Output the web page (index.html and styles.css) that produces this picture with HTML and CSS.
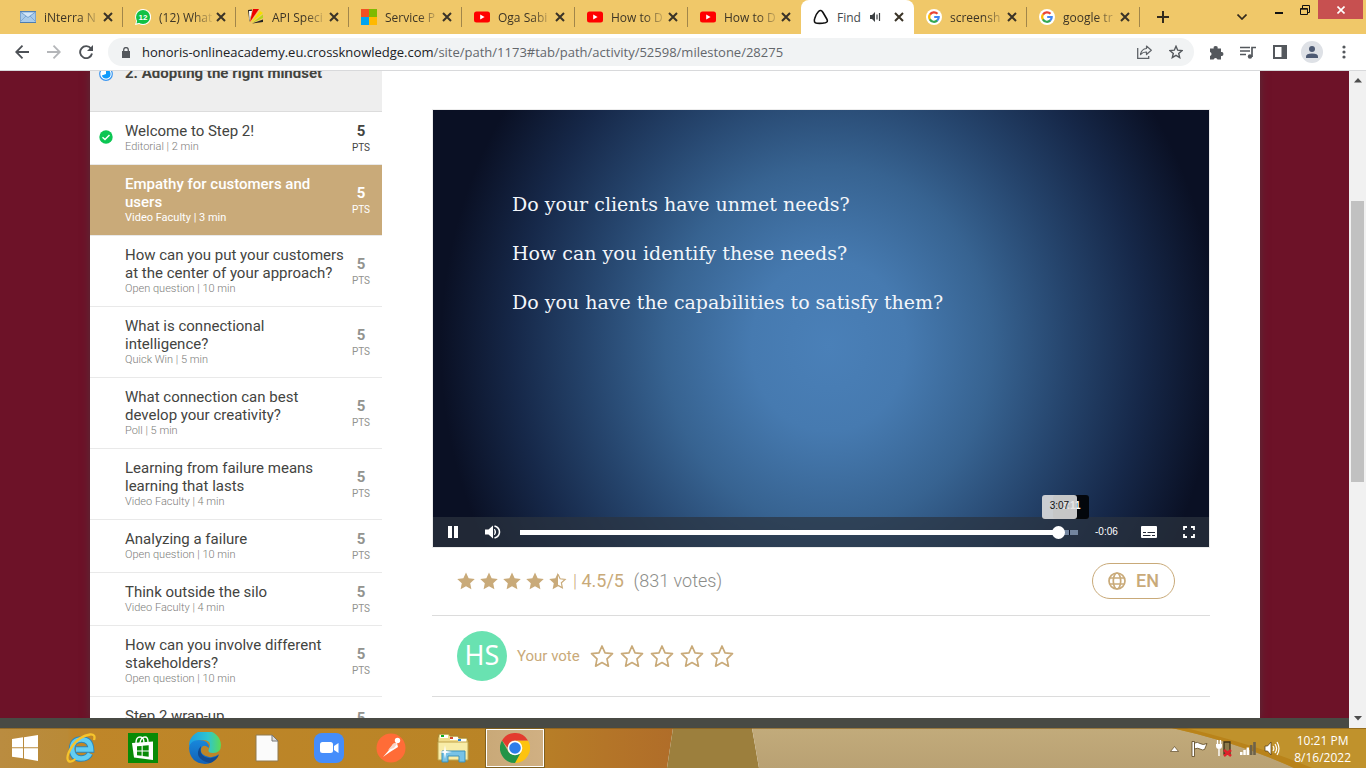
FILE: index.html
```html
<!DOCTYPE html>
<html lang="en">
<head>
<meta charset="utf-8">
<title>Find your path</title>
<link rel="stylesheet" href="styles.css">
</head>
<body>
<svg class="defs" aria-hidden="true">
  <symbol id="x" viewBox="0 0 10 10"><path d="M1 1l8 8M9 1L1 9" stroke="#3a3327" stroke-width="2" fill="none"/></symbol>
  <symbol id="yt" viewBox="0 0 16 16"><rect y="2.500" width="16" height="11" rx="2.500" fill="#f00"/><path d="M6.200 5.500v5L10.600 8z" fill="#fff"/></symbol>
  <symbol id="g" viewBox="0 0 16 16"><circle cx="8" cy="8" r="8" fill="#fff"/><g fill="none" stroke-width="2.200"><path d="M4 5.600A4.700 4.700 0 0 1 11.500 4.800" stroke="#ea4335"/><path d="M4 5.400a4.700 4.700 0 0 0 0 5.200" stroke="#fbbc05"/><path d="M3.900 10.400a4.700 4.700 0 0 0 7.400 1" stroke="#34a853"/><path d="M8.200 8h4.500a4.600 4.600 0 0 1-1.600 3.600" stroke="#4285f4"/></g></symbol>
  <symbol id="star" viewBox="0 0 24 24"><path d="M12 .8l3.500 7.500 8.200 1-6.100 5.600 1.600 8.200L12 19l-7.200 4.100 1.600-8.200L.3 9.300l8.200-1z"/></symbol>
  <symbol id="half" viewBox="0 0 24 24"><path d="M12 .8V19l-7.200 4.100 1.600-8.200L.3 9.300l8.200-1z"/><path d="M12 3l2.800 6 6.700.8-5 4.600 1.300 6.600L12 17.800" fill="none" stroke="#c9aa79" stroke-width="1.600"/></symbol>
  <symbol id="outline" viewBox="0 0 24 24"><path d="M12 2l3 6.800 7.500.9-5.500 5.100 1.400 7.400L12 18.600l-6.400 3.600L7 14.800 1.500 9.700 9 8.800z" fill="none" stroke="#c9aa79" stroke-width="1.700" stroke-linejoin="round"/></symbol>
</svg>

<header class="chrome">
  <div class="tabstrip">
    <div class="tab"><svg class="fav" viewBox="0 0 16 16"><rect y="2.500" width="16" height="11" fill="#a9cbea" stroke="#4e7db0"/><path d="M0 13l6-6M16 13l-6-6" fill="none" stroke="#7fa9d4"/><path d="M.5 3l7.500 5.500L15.500 3z" fill="#d3e6f7" stroke="#5b8cc0" stroke-width=".7"/></svg><span class="name">iNterra N</span><button class="close" aria-label="Close tab"><svg><use href="#x"/></svg></button></div>
    <div class="tab"><svg class="fav" viewBox="0 0 16 16"><path d="M8 0a8 8 0 1 1-3.800 15L0 16l1.200-4A8 8 0 0 1 8 0z" fill="#fff"/><circle cx="8" cy="8" r="7" fill="#12c144"/><path d="M1.500 14.500l1-4 3 3z" fill="#12c144"/><text x="8" y="11" text-anchor="middle" class="badge">12</text></svg><span class="name">(12) What</span><button class="close" aria-label="Close tab"><svg><use href="#x"/></svg></button></div>
    <div class="tab"><svg class="fav" viewBox="0 0 16 16"><path d="M0 1l4-.5L1.500 13z" fill="#222"/><path d="M1 2h3L1.500 12z" fill="#fff"/><path d="M5 0h6L2 13z" fill="#e00"/><path d="M12 2l3 2L3 13.500z" fill="#f5e000"/><path d="M15 5.500V9L4 14z" fill="#b5d51d"/><path d="M15 10.500V13L4 14.500z" fill="#222"/></svg><span class="name">API Speci</span><button class="close" aria-label="Close tab"><svg><use href="#x"/></svg></button></div>
    <div class="tab"><svg class="fav" viewBox="0 0 16 16"><path d="M0 0h8v8H0z" fill="#f25022"/><path d="M8 0h8v8H8z" fill="#7fba00"/><path d="M0 8h8v8H0z" fill="#00a4ef"/><path d="M8 8h8v8H8z" fill="#ffb900"/></svg><span class="name">Service P</span><button class="close" aria-label="Close tab"><svg><use href="#x"/></svg></button></div>
    <div class="tab"><svg class="fav"><use href="#yt"/></svg><span class="name">Oga Sabi</span><button class="close" aria-label="Close tab"><svg><use href="#x"/></svg></button></div>
    <div class="tab"><svg class="fav"><use href="#yt"/></svg><span class="name">How to D</span><button class="close" aria-label="Close tab"><svg><use href="#x"/></svg></button></div>
    <div class="tab before"><svg class="fav"><use href="#yt"/></svg><span class="name">How to D</span><button class="close" aria-label="Close tab"><svg><use href="#x"/></svg></button></div>
    <div class="tab active"><svg class="fav" viewBox="0 0 16 16"><path d="M5.500 2.500Q8 0 10 3.500l3.800 6.500q1.700 3-1.500 3.800-4 .9-8.300.5Q.2 13.800 1.700 9.500 3 5 5.500 2.500z" fill="none" stroke="#111" stroke-width="1.600"/></svg><span class="name">Find</span><svg class="sound" viewBox="0 0 12 10"><path d="M0 3h2l3-3v10L2 7H0z" fill="#3c4043"/><path d="M7 2.500v5M9.500 1v8" stroke="#3c4043" stroke-width="1.200"/></svg><button class="close" aria-label="Close tab"><svg><use href="#x"/></svg></button></div>
    <div class="tab"><svg class="fav"><use href="#g"/></svg><span class="name">screensh</span><button class="close" aria-label="Close tab"><svg><use href="#x"/></svg></button></div>
    <div class="tab"><svg class="fav"><use href="#g"/></svg><span class="name">google tr</span><button class="close" aria-label="Close tab"><svg><use href="#x"/></svg></button></div>
    <button class="newtab" aria-label="New tab"><svg viewBox="0 0 12 12"><path d="M6 0v12M0 6h12" stroke="#332b1d" stroke-width="2"/></svg></button>
    <div class="win">
      <button class="chev" aria-label="Search tabs"><svg width="10" height="6" viewBox="0 0 10 6"><path d="M.5.500L5 5l4.500-4.500" fill="none" stroke="#332b1d" stroke-width="1.700"/></svg></button>
      <button class="wbtn" aria-label="Minimize"><svg width="10" height="10" viewBox="0 0 10 10"><path d="M1 8h8" stroke="#111" stroke-width="2"/></svg></button>
      <button class="wbtn" aria-label="Restore"><svg width="10" height="10" viewBox="0 0 10 10"><path d="M.5 3.500h7v6h-7zM.5 4.200h7M2.500 3V.5h7v7H8" fill="none" stroke="#111"/></svg></button>
      <button class="wclose" aria-label="Close window"><svg width="8" height="8" viewBox="0 0 8 8"><path d="M.5.500l7 7M7.500.500l-7 7" stroke="#fff" stroke-width="1.600"/></svg></button>
    </div>
  </div>
  <div class="toolbar">
    <button aria-label="Back"><svg width="14" height="14" viewBox="0 0 14 14"><path d="M14 7H1.500M7.500.700L1.200 7l6.300 6.300" fill="none" stroke="#4d5156" stroke-width="1.800"/></svg></button>
    <button aria-label="Forward"><svg width="14" height="14" viewBox="0 0 14 14"><path d="M0 7h12.500M6.500.700L12.800 7l-6.300 6.300" fill="none" stroke="#b4b6b9" stroke-width="1.800"/></svg></button>
    <button aria-label="Reload"><svg width="14" height="14" viewBox="0 0 14 14"><path d="M12 3.600A6 6 0 1 0 13 8.500" fill="none" stroke="#4d5156" stroke-width="1.900"/><path d="M14 0v6H8z" fill="#4d5156"/></svg></button>
    <div class="omnibox">
      <svg class="lock" width="8" height="11" viewBox="0 0 8 11"><path d="M0 4h8v7H0z" fill="#54585d"/><path d="M1.700 4.500V2.800a2.300 2.300 0 0 1 4.600 0v1.700" fill="none" stroke="#54585d" stroke-width="1.300"/></svg>
      <a class="url" href="#"><b>honoris-onlineacademy.eu.crossknowledge.com</b>/site/path/1173#tab/path/activity/52598/milestone/28275</a>
      <button aria-label="Share"><svg width="15" height="14" viewBox="0 0 15 14"><path d="M.7 3v10.300h11V11" fill="none" stroke="#5f6368" stroke-width="1.300"/><path d="M9.500 1l4.800 4.300-4.800 4.200V7Q6 6.800 3.500 9.500 4.500 4 9.500 3.500z" fill="none" stroke="#5f6368" stroke-width="1.200" stroke-linejoin="round"/></svg></button>
      <button aria-label="Bookmark"><svg width="14" height="14" viewBox="0 0 14 14"><path d="M7 1.300l1.700 3.900 4.300.4-3.300 2.800 1 4.200L7 10.400l-3.700 2.200 1-4.200L1 5.600l4.300-.4z" fill="none" stroke="#54585d" stroke-width="1.400"/></svg></button>
    </div>
    <div class="ext">
      <button aria-label="Extensions"><svg width="15" height="15" viewBox="0 0 15 15"><path d="M1 3.500h3.700a2 2 0 1 1 3.900 0H12v3.600a2 2 0 1 1 0 3.900v3.500H8.500a2 2 0 0 0-3.900 0H1V11a2 2 0 0 0 0-3.900z" fill="#54585d"/></svg></button>
      <button aria-label="Media"><svg width="16" height="13" viewBox="0 0 16 13"><path d="M0 1.500h10M0 5h10M0 8.500h6" stroke="#54585d" stroke-width="1.600"/><circle cx="10" cy="10.500" r="2.200" fill="#54585d"/><path d="M12 11V1.500h4" fill="none" stroke="#54585d" stroke-width="1.700"/></svg></button>
      <button aria-label="Side panel"><svg width="14" height="14" viewBox="0 0 14 14"><path d="M1 1h12v12H1z" fill="none" stroke="#54585d" stroke-width="2"/><path d="M8.500 1H13v12H8.500z" fill="#54585d"/></svg></button>
      <button aria-label="Profile"><svg width="22" height="22" viewBox="0 0 22 22"><circle cx="11" cy="11" r="11" fill="#dee1e6"/><circle cx="11" cy="8" r="3" fill="#4d5a73"/><path d="M5 17v-1.500q0-3 6-3t6 3V17z" fill="#4d5a73"/></svg></button>
      <button aria-label="Menu"><svg width="4" height="14" viewBox="0 0 4 14"><g fill="#54585d"><circle cx="2" cy="2" r="1.600"/><circle cx="2" cy="7" r="1.600"/><circle cx="2" cy="12" r="1.600"/></g></svg></button>
    </div>
  </div>
</header>

<div class="viewport">
  <div class="scene">
    <div class="page">
      <aside class="side">
        <div class="step"><svg class="state" viewBox="0 0 14 14"><circle cx="7" cy="7" r="6.300" fill="#fff" stroke="#3b96f0" stroke-width="1.200"/><path d="M7 2.500a4.500 4.500 0 1 1-4.200 6L7 7z" fill="#109bfb"/></svg><h2>2. Adopting the right mindset</h2></div>
        <ul class="list">
          <li class="done"><svg class="state" viewBox="0 0 14 14"><circle cx="7" cy="7" r="6.700" fill="#0cc653"/><path d="M3.500 7.200l2.500 2.400 4.500-4.600" fill="none" stroke="#fff" stroke-width="1.400"/></svg><a href="#">Welcome to Step 2!<small>Editorial | 2 min</small></a><p class="pts"><b>5</b>PTS</p></li>
          <li class="current"><a href="#">Empathy for customers and users<small>Video Faculty | 3 min</small></a><p class="pts"><b>5</b>PTS</p></li>
          <li><a href="#">How can you put your customers at the center of your approach?<small>Open question | 10 min</small></a><p class="pts"><b>5</b>PTS</p></li>
          <li><a href="#">What is connectional intelligence?<small>Quick Win | 5 min</small></a><p class="pts"><b>5</b>PTS</p></li>
          <li><a href="#">What connection can best develop your creativity?<small>Poll | 5 min</small></a><p class="pts"><b>5</b>PTS</p></li>
          <li><a href="#">Learning from failure means learning that lasts<small>Video Faculty | 4 min</small></a><p class="pts"><b>5</b>PTS</p></li>
          <li><a href="#">Analyzing a failure<small>Open question | 10 min</small></a><p class="pts"><b>5</b>PTS</p></li>
          <li><a href="#">Think outside the silo<small>Video Faculty | 4 min</small></a><p class="pts"><b>5</b>PTS</p></li>
          <li><a href="#">How can you involve different stakeholders?<small>Open question | 10 min</small></a><p class="pts"><b>5</b>PTS</p></li>
          <li class="last"><a href="#">Step 2 wrap-up</a><p class="pts"><b>5</b></p></li>
        </ul>
      </aside>
      <main class="main">
        <section class="video">
          <div class="slide">
            <p>Do your clients have unmet needs?</p>
            <p>How can you identify these needs?</p>
            <p>Do you have the capabilities to satisfy them?</p>
          </div>
          <div class="controls">
            <button aria-label="Pause"><svg width="12" height="12" viewBox="0 0 12 12"><path d="M1 0h4v12H1zM7 0h4v12H7z" fill="#fff"/></svg></button>
            <button aria-label="Mute"><svg width="16" height="14" viewBox="0 0 16 14"><path d="M0 4.500h3.500L8 .5v13l-4.500-4H0z" fill="#fff"/><path d="M9.500 4q2.200 3 0 6" fill="#fff" stroke="#fff"/><path d="M9.500 1q5 1.500 5 6t-5 6" fill="none" stroke="#fff" stroke-width="1.600"/></svg></button>
            <div class="progress">
              <div class="played"><span class="knob"></span><span class="tip dark">3:11</span><span class="tip light">3:07</span></div>
              <span class="tick"></span>
            </div>
            <span class="time">-0:06</span>
            <button aria-label="Subtitles"><svg width="16" height="12" viewBox="0 0 16 12"><rect width="16" height="12" rx="1" fill="#fff"/><path d="M2 6.500h3M6.500 6.500h7.500M2 9.500h7.500M11 9.500h3" stroke="#232a38" stroke-width="1.200"/></svg></button>
            <button aria-label="Fullscreen"><svg width="12" height="12" viewBox="0 0 12 12"><path d="M1 4V1h3M8 1h3v3M11 8v3H8M4 11H1V8" fill="none" stroke="#fff" stroke-width="1.800"/></svg></button>
          </div>
        </section>
        <section class="rating">
          <div class="stars"><svg><use href="#star"/></svg><svg><use href="#star"/></svg><svg><use href="#star"/></svg><svg><use href="#star"/></svg><svg><use href="#half"/></svg></div>
          <p class="score"><i>|</i> 4.5/5 <span>(831 votes)</span></p>
          <button class="lang"><svg width="18" height="18" viewBox="0 0 18 18"><g fill="none" stroke="#c9aa79" stroke-width="1.700"><circle cx="9" cy="9" r="8"/><ellipse cx="9" cy="9" rx="3.700" ry="8"/><path d="M1.500 6h15M1.500 12h15"/></g></svg>EN</button>
        </section>
        <section class="vote">
          <span class="avatar">HS</span>
          <span class="label">Your vote</span>
          <div class="pick"><button aria-label="1 star"><svg><use href="#outline"/></svg></button><button aria-label="2 stars"><svg><use href="#outline"/></svg></button><button aria-label="3 stars"><svg><use href="#outline"/></svg></button><button aria-label="4 stars"><svg><use href="#outline"/></svg></button><button aria-label="5 stars"><svg><use href="#outline"/></svg></button></div>
        </section>
      </main>
    </div>
    <div class="strip"></div>
  </div>
  <div class="scroll">
    <svg width="8" height="5" viewBox="0 0 8 5"><path d="M0 4.500L4 0l4 4.500z" fill="#4d4d4d"/></svg>
    <div class="track"><span class="thumb"></span></div>
    <svg width="8" height="5" viewBox="0 0 8 5"><path d="M0 0l4 4.500L8 0z" fill="#4d4d4d"/></svg>
  </div>
</div>

<footer class="taskbar">
  <svg class="wall" viewBox="0 0 1366 40" preserveAspectRatio="none" aria-hidden="true">
    <defs>
      <linearGradient id="w1"><stop offset="0" stop-color="#ba8c40"/><stop offset=".1" stop-color="#b98a37"/><stop offset=".11" stop-color="#bf8629"/><stop offset=".75" stop-color="#b98426"/><stop offset=".9" stop-color="#b47528"/><stop offset="1" stop-color="#b06d29"/></linearGradient>
      <linearGradient id="w2" x2="0" y2="1"><stop offset="0" stop-color="#c2ab7b"/><stop offset="1" stop-color="#b9a173"/></linearGradient>
    </defs>
    <path d="M0 0h673l-6 40H0z" fill="url(#w1)"/>
    <path d="M673 0h79l7 40h-92z" fill="#9c7f3d"/>
    <path d="M752 0h614v40H759z" fill="url(#w2)"/>
    <path d="M1172 0h194v40h-72Q1240 15 1172 0z" fill="#c0922c"/>
    <path d="M1172 0h14Q1260 18 1312 40h-18Q1240 15 1172 0z" fill="#b9831a"/>
    <path d="M0 .5h1366" stroke="#7d5718" opacity=".6"/>
  </svg>
  <button class="start" aria-label="Start"><svg width="28" height="26" viewBox="0 0 28 26"><path d="M1 4l11-1.700v10H1zM13 2.200L27 0v12.300H13zM1 13.300h11v10L1 21.700zM13 13.300h14V26l-14-2.400z" fill="#fff"/></svg></button>
  <nav class="apps">
    <button aria-label="Internet Explorer"><svg width="32" height="32" viewBox="0 0 32 32"><path d="M25 21.500q-2.500 5-9 5-8.500 0-9-9.500.5-9.500 9.500-9.500T26 17.500H11" fill="none" stroke="#2c86bb" stroke-width="6.500"/><path d="M25 21.500q-2.500 5-9 5-8.500 0-9-9.500.5-9.500 9.500-9.500T26 17.500H11" fill="none" stroke="#62cdf3" stroke-width="4.700"/><path d="M29 8q2-6-4-5.500Q15 4 8 13 0 25 3.500 29q2.500 2 7-2" fill="none" stroke="#f6c42c" stroke-width="2.300"/></svg></button>
    <button aria-label="Store"><svg width="30" height="30" viewBox="0 0 30 30"><path d="M0 0h30v30H0z" fill="#088a06"/><path d="M4 10l21-1.500V27L6 24.500z" fill="#fff"/><path d="M8 10q0-6 4-6t4 6M12 10q1-6 5-6 3 0 3 5" fill="none" stroke="#fff" stroke-width="1.400"/><path d="M9 13.300l4.600-.4v4.500H9zM14.700 12.800l6-.5v5.100h-6zM9 18.500h4.600v4.300l-4.600-.6zM14.700 18.500h6v5.200l-6-.8z" fill="#088a06"/></svg></button>
    <button aria-label="Edge"><svg width="32" height="32" viewBox="0 0 32 32"><defs><linearGradient id="e1"><stop stop-color="#1a9fe3"/><stop offset=".6" stop-color="#2fc5cf"/><stop offset="1" stop-color="#5cdb55"/></linearGradient><linearGradient id="e2" x2="0" y2="1"><stop stop-color="#1888dc"/><stop offset="1" stop-color="#1361b5"/></linearGradient></defs><path d="M0 14A16 15 0 0 1 32 13q0 8-8 8-6 0-4-4Q24 8 13 8 4 8 0 14z" fill="url(#e1)"/><path d="M0 16Q1 8 10 8q10 0 10 8-6-5-8 1-1 6 8 8 5 1 10-3-5 10-14 10Q1 31 0 16z" fill="url(#e2)"/><path d="M12 14q-2 8 4 11 7 3 14-2-3 6-9 8Q8 28 9 20q1-4 3-6z" fill="#124a91"/></svg></button>
    <button aria-label="Document"><svg width="24" height="28" viewBox="0 0 24 28"><path d="M1 1h16l6 6v20H1z" fill="#fbfbfb" stroke="#8f7b50"/><path d="M17 1v6h6z" fill="#ddd" stroke="#777"/></svg></button>
    <button aria-label="Zoom"><svg width="30" height="30" viewBox="0 0 30 30"><rect width="30" height="30" rx="8" fill="#458dfb"/><rect x="6" y="9" width="13" height="11" rx="2.500" fill="#fff"/><path d="M20 13l4.500-3v10L20 17z" fill="#fff"/></svg></button>
    <button aria-label="Postman"><svg width="30" height="30" viewBox="0 0 30 30"><circle cx="15" cy="15" r="14.500" fill="#ff6c37"/><circle cx="21.500" cy="7.500" r="2.700" fill="#fff"/><path d="M21 10l1 4-8 5-7 5 6-7 4-6z" fill="#fff"/><path d="M18 10l-6 7 6-2 3-4z" fill="#f7d5c7"/></svg></button>
    <button aria-label="File Explorer"><svg width="32" height="30" viewBox="0 0 32 30"><path d="M1 5l1-4h10l1 2h8l1 2h8l1 3v19H1z" fill="#f1dd8c" stroke="#a58532"/><path d="M3 2h8v3H3zM13 4h8v3h-8zM21 6h8v3h-8z" fill="#fff"/><path d="M4 2h3v2H4z" fill="#11ad20"/><path d="M13 4h3v2h-3z" fill="#d4492c"/><path d="M21 6h3v2h-3z" fill="#2084d7"/><path d="M1 9h30v18H1z" fill="#f8eca7" stroke="#c1a34b"/><path d="M5 29V18h23v11h-6v-6H11v6z" fill="#77c2e6" stroke="#3d91b9"/><path d="M8 12l1 6 6 1-6 1-1 6-1-6-5-1 5-1z" fill="#fff"/></svg></button>
    <button class="running" aria-label="Chrome"><svg width="30" height="30" viewBox="0 0 30 30"><path d="M15 7.500h13a15 15 0 0 1-13 22.500z" fill="#fdc30f"/><path d="M2 7.500A15 15 0 0 1 28 7.500H15q-6 0-7.500 7L2 7.500z" fill="#e33b2e"/><path d="M2 7.500L8.500 19q3 4 12 1L15 30A15 15 0 0 1 2 7.500z" fill="#239447"/><circle cx="15" cy="15" r="7.300" fill="#fff"/><circle cx="15" cy="15" r="5.800" fill="#2b7de9"/></svg></button>
  </nav>
  <div class="tray">
    <svg width="9" height="6" viewBox="0 0 9 6"><path d="M.5 5.500L4.500.500l4 5z" fill="#fff" stroke="#5e4a28" stroke-width=".7"/></svg>
    <svg width="17" height="16" viewBox="0 0 17 16"><path d="M1 .5h2.500v15H1z" fill="#fff" stroke="#5a4520" stroke-width=".8"/><path d="M3.500 2q3-1.500 5.500.500 3 2 7 0l-2.500 6q-2 1-4.500-.5T3.500 8z" fill="#fff" stroke="#5a4520" stroke-width=".8"/></svg>
    <svg width="16" height="17" viewBox="0 0 16 17"><path d="M8 2h6v12H8z" fill="#8d7a4a" stroke="#3e3318" stroke-width="1.300"/><path d="M1.500 0v4M4.500 0v4" stroke="#fff" stroke-width="1.300"/><path d="M0 4h6v2q0 3-3 3T0 6zM2.300 8h1.400v8H2.300z" fill="#fff"/><path d="M8 10l7 6M15 10l-7 6" stroke="#e0202a" stroke-width="2.500"/></svg>
    <svg width="16" height="13" viewBox="0 0 16 13"><path d="M0 10h2.500v3H0zM3.300 8h2.500v5H3.300zM6.600 5.500h2.500V13H6.600z" fill="#fff"/><path d="M9.900 3h2.500v10H9.900zM13.200 0h2.600v13h-2.600z" fill="#6d624a"/></svg>
    <svg width="16" height="15" viewBox="0 0 16 15"><path d="M1 5h2.500L7 1v13L3.500 10H1z" fill="#fff" stroke="#5a4520" stroke-width=".8"/><path d="M9 5q1.800 2.500 0 5M11 3q3.200 4.500 0 9M13 1q4 6.500 0 13" fill="none" stroke="#fff" stroke-width="1.200"/></svg>
    <div class="clock"><time>10:21 PM</time><time>8/16/2022</time></div>
  </div>
</footer>
</body>
</html>
```
FILE: styles.css
```css
* { box-sizing: border-box; }
body { margin: 0; height: 100vh; display: flex; flex-direction: column; overflow: hidden; font-family: Roboto, "Liberation Sans", sans-serif; background: #fff; }
button { border: 0; padding: 0; background: none; font: inherit; color: inherit; display: flex; align-items: center; justify-content: center; cursor: pointer; }
svg { display: block; flex: none; }
a { color: inherit; text-decoration: none; }
p, h2, ul { margin: 0; padding: 0; }
.defs { position: absolute; width: 0; height: 0; }

/* browser frame */
.chrome { flex: none; font-family: "Open Sans", "Noto Sans", sans-serif; }
.tabstrip { display: flex; height: 34px; padding-left: 10px; background: #f0c869; }
.tab { position: relative; flex: 0 1 113px; min-width: 0; display: flex; align-items: center; padding: 0 10px 0 12px; font-size: 12px; color: #3d3526; }
.tab:first-child { padding-left: 10px; }
.tab::after { content: ""; position: absolute; right: 0; top: 7px; width: 1px; height: 20px; background: #a1864a; }
.tab.before::after, .tab.active::after { display: none; }
.tab.before { border-radius: 0 0 8px 0; }
.tab.active { background: #fff; border-radius: 8px 8px 0 0; color: #45494d; }
.fav { width: 16px; height: 16px; margin-right: 8px; }
.badge { font: bold 8px "Liberation Sans", sans-serif; fill: #fff; }
.name { flex: 1; min-width: 0; overflow: hidden; white-space: nowrap; margin-right: 1px; -webkit-mask-image: linear-gradient(90deg, #000 60%, transparent); mask-image: linear-gradient(90deg, #000 60%, transparent); }
.active .name { margin-right: 0; -webkit-mask-image: none; mask-image: none; }
.close svg { width: 10px; height: 10px; }
.sound { width: 12px; height: 10px; margin: 0 12px 0 5px; }
.newtab { width: 45px; }
.newtab svg { width: 12px; height: 12px; }
.win { margin-left: auto; display: flex; align-items: flex-start; padding-right: 3px; }
.chev { width: 34px; height: 34px; margin-right: 7px; }
.wbtn { width: 26px; height: 19px; }
.wclose { width: 45px; height: 19px; background: #c75050; }
.toolbar { display: flex; align-items: center; height: 37px; padding: 0 10px 0 6px; border-bottom: 1px solid #d8d9db; background: #fff; }
.toolbar > button { width: 32px; height: 28px; }
.omnibox { flex: 1; min-width: 0; display: flex; align-items: center; height: 28px; margin-left: 6px; padding: 0 2px 0 14px; border-radius: 14px; background: #f1f3f4; }
.omnibox button { width: 32px; height: 28px; }
.url { flex: 1; min-width: 0; overflow: hidden; white-space: nowrap; margin-left: 12px; font-size: 13px; color: #63676c; }
.url b { font-weight: 400; color: #202124; }
.ext { display: flex; margin-left: 6px; }
.ext button { width: 32px; height: 28px; }
.ext button:last-child { margin-right: -4px; }

/* visible page */
.viewport { flex: 1; min-height: 0; display: flex; }
.scene { flex: 1; min-width: 0; display: flex; flex-direction: column; overflow: hidden; background: #6d1228; }
.page { flex: 1; min-height: 0; display: flex; margin: 0 89px 0 90px; overflow: hidden; background: #fff; box-shadow: 0 0 8px #55303a; }
.strip { flex: none; position: relative; height: 10px; background: #484a44; }
.scroll { flex: none; width: 17px; display: flex; flex-direction: column; align-items: center; padding: 7px 0; background: #f1f1f1; }
.track { flex: 1; width: 13px; padding: 118px 0 0; }
.thumb { display: block; height: 281px; background: #c1c1c1; }

.side { flex: none; width: 292px; overflow: hidden; color: #43443f; }
.step { position: relative; display: flex; height: 41px; padding-left: 35px; border-bottom: 1px solid #dcdcdc; background: #eee; }
.step h2 { margin-top: -7px; font-size: 15px; line-height: 18px; font-weight: 700; }
.state { position: absolute; left: 9px; top: 50%; width: 14px; height: 14px; margin-top: -8px; }
.step .state { top: 4px; }
.list { list-style: none; }
.list li { position: relative; display: flex; align-items: center; padding: 10px 8px 11px 35px; border-bottom: 1px solid #e9e9e9; }
.list .last { align-items: flex-start; }
.list a { flex: 1; font-size: 15px; line-height: 18px; }
.list small { display: block; font-size: 11px; line-height: 13px; font-weight: 300; color: #7d7d7a; }
.pts { flex: none; width: 26px; margin: -4px 0; padding-top: 3px; text-align: center; font-size: 10px; line-height: 15px; color: #92938f; }
.pts b { display: block; font-size: 15px; line-height: 17px; font-weight: 700; }
.last .pts { margin-top: 0; }
.done .pts { color: #43443f; }
.list .current { background: #c9aa79; color: #fff; }
.current a { font-weight: 500; }
.current .pts, .current small { color: #fff; }
.current small { font-weight: 400; }

.main { flex: 1; min-width: 0; padding: 38px 50px 0; }
.video { position: relative; display: flex; flex-direction: column; justify-content: space-between; aspect-ratio: 778 / 439; border: 1px solid #ececec; background: radial-gradient(ellipse 50% 98% at 51% 54%, #4a80b8 0, #467ab0 20%, #376391 42%, #25446c 62%, #162849 81%, #0a1024 100%); }
.slide { padding: 79px 0 0 79px; color: #f3f6fa; font-family: "Roboto Slab", "DejaVu Serif", serif; font-size: 19px; line-height: 31px; }
.slide p + p { margin-top: 18px; }
.controls { display: flex; align-items: center; height: 30px; background: rgba(43, 51, 63, .7); color: #fff; font: 10px/30px "Liberation Sans", sans-serif; }
.controls button { width: 40px; height: 30px; }
.progress { position: relative; flex: 1; height: 5px; margin: 0 17px 0 7px; background: #73859f; }
.played { position: relative; width: 96.4%; height: 5px; background: #fff; }
.knob { position: absolute; right: -7px; top: -4px; width: 13px; height: 13px; border-radius: 50%; background: #fff; }
.tick { position: absolute; right: 8px; top: 0; width: 1px; height: 5px; background: #0a1024; }
.tip { position: absolute; top: -35px; height: 24px; border-radius: 3px; line-height: 22px; text-align: center; }
.tip.dark { right: -31px; width: 36px; background: rgba(0, 0, 0, .85); font-weight: 700; }
.tip.light { right: -19px; width: 35px; background: rgba(225, 225, 225, .88); color: #111; }
.time { width: 24px; margin-right: 10px; white-space: nowrap; }

.rating, .vote { display: flex; align-items: center; border-bottom: 1px solid #dcdcdc; padding: 0 35px 2px 25px; }
.rating { height: 68px; }
.stars { display: flex; gap: 5px; }
.stars svg { width: 18px; height: 18px; fill: #c9aa79; }
.score { margin-left: 6px; font-size: 18px; color: #c9aa79; }
.score i { font-style: normal; font-weight: 300; }
.score span { margin-left: 5px; font-weight: 300; color: #8c8d89; }
.lang { margin-left: auto; width: 83px; height: 36px; gap: 10px; border: 1px solid #c9aa79; border-radius: 18px; color: #c9aa79; font-size: 18px; font-weight: 500; }
.vote { height: 81px; padding-bottom: 0; }
.avatar { width: 50px; height: 50px; border-radius: 50%; background: #69e2b1; color: #fff; text-align: center; font: 27px/48px "Noto Sans", sans-serif; }
.label { margin-left: 10px; font-size: 15px; color: #c9aa79; }
.pick { display: flex; gap: 6px; margin-left: 10px; }
.pick svg { width: 24px; height: 24px; }

/* desktop taskbar */
.taskbar { position: relative; flex: none; display: flex; height: 40px; }
.wall { position: absolute; left: 0; top: 0; width: 100%; height: 100%; }
.start, .apps, .tray { position: relative; }
.start { width: 50px; }
.apps { display: flex; align-items: center; }
.apps button { width: 62px; height: 38px; }
.apps .running { width: 58px; margin-left: 2px; border: 1px solid #fff; outline: 1px solid #80601f; background: linear-gradient(90deg, #c9a978, #d0b083); }
.tray { margin-left: auto; display: flex; align-items: center; gap: 8px; padding: 1px 15px 0 0; }
.tray > svg:first-child { margin-right: 4px; }
.clock { margin-left: 6px; display: flex; flex-direction: column; align-items: center; color: #fff; font: 12px/17px "Open Sans", sans-serif; }
```
